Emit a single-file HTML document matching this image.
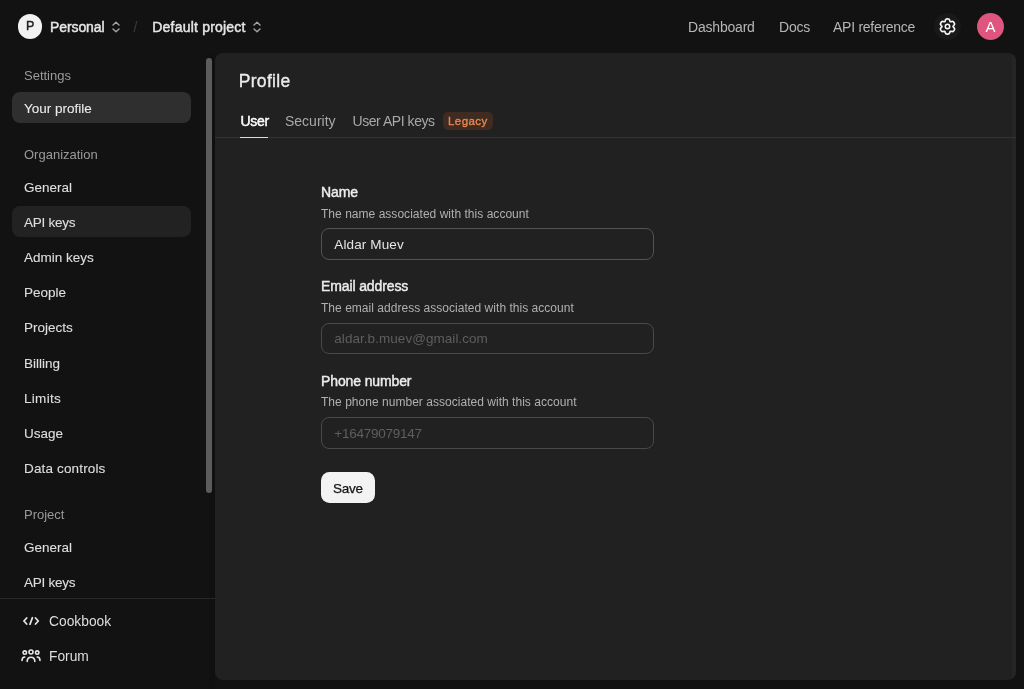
<!DOCTYPE html>
<html lang="en">
<head>
<meta charset="utf-8">
<title>Profile</title>
<style>
*{box-sizing:border-box;margin:0;padding:0}
html,body{width:1024px;height:689px;overflow:hidden;background:#121212;color:#ececec;font-family:"Liberation Sans",sans-serif;font-size:14px}
.abs{position:absolute}
#top{position:absolute;left:0;top:0;width:1024px;height:54px}
.pav{position:absolute;left:17.5px;top:14.3px;width:24.6px;height:24.6px;border-radius:50%;background:#f2f2f2;color:#222;font-size:12.5px;font-weight:400;-webkit-text-stroke:0.4px #222;text-align:center;line-height:25.6px;padding-left:0.8px}
.crumb{position:absolute;top:17px;font-size:14px;font-weight:400;-webkit-text-stroke:0.45px #e6e6e6;line-height:20px;color:#e6e6e6;white-space:nowrap;letter-spacing:0.1px}
.slash{position:absolute;top:17px;left:133.6px;color:#3c3c3c;font-size:14px;line-height:20px}
.nav{position:absolute;top:17px;font-size:14px;line-height:20px;color:#b6b6b6;white-space:nowrap;letter-spacing:-0.2px}
.gearbg{position:absolute;left:933.8px;top:12.7px;width:27.6px;height:27.6px;border-radius:50%;background:#191919}
.uav{position:absolute;left:976.8px;top:12.8px;width:27.6px;height:27.6px;border-radius:50%;background:#de5580;color:#fff;font-size:15px;text-align:center;line-height:28px}
#side{position:absolute;left:0;top:54px;width:214px;height:635px}
.sh{position:absolute;left:24px;margin-top:1px;font-size:13px;line-height:18px;color:#9a9a9a;white-space:nowrap}
.si{position:absolute;left:12px;width:179px;height:31px;border-radius:8px;padding-left:12px;padding-top:1px;font-size:13.5px;line-height:31px;color:#dedede;white-space:nowrap;-webkit-text-stroke:0.12px #dedede}
.si.sel{background:#2f2f2f;color:#ececec}
.si.hov{background:#222222}
.sb{position:absolute;left:205.7px;top:57.6px;width:6px;height:435.6px;border-radius:3px;background:#5c5c5c}
.sdiv{position:absolute;left:0;top:598px;width:215px;height:1px;background:#292929}
.sl{position:absolute;left:49px;font-size:13.8px;line-height:20px;color:#dedede;white-space:nowrap}
#main{position:absolute;left:215px;top:53.3px;width:800.5px;height:626.7px;border-radius:8px;background:#212121;overflow:hidden}
#mi{position:absolute;left:0;top:0.7px;width:800px;height:626px}
.mtrack{position:absolute;right:0;top:0;width:3.5px;height:100%;background:#252525}
h1{position:absolute;left:23.7px;top:16.5px;font-size:17.5px;line-height:22px;font-weight:400;color:#ececec;-webkit-text-stroke:0.35px #ececec;letter-spacing:0.32px}
.tab{position:absolute;top:57px;font-size:14px;line-height:20px;color:#a8a8a8;white-space:nowrap}
.tab.on{color:#fff;font-weight:400;-webkit-text-stroke:0.45px #fff;letter-spacing:-0.3px}
.tline{position:absolute;left:0;top:83px;width:801px;height:1px;background:#333}
.tul{position:absolute;left:25px;top:82.7px;width:28px;height:1.3px;background:#dedede}
.badge{position:absolute;left:228px;top:57.9px;width:49.6px;height:18.1px;border-radius:5px;background:#3f2b21;color:#e8864f;font-size:11.5px;font-weight:400;-webkit-text-stroke:0.35px #e8864f;line-height:19.4px;text-align:center;letter-spacing:0.4px;overflow:hidden}
.fl{position:absolute;left:106px;transform:translateY(0.5px);font-size:14px;font-weight:400;-webkit-text-stroke:0.45px #ececec;line-height:20px;color:#ececec;white-space:nowrap;letter-spacing:-0.12px}
.fd{position:absolute;left:106px;transform:translateY(0.5px);font-size:12px;line-height:16px;color:#b0b0b0;white-space:nowrap;letter-spacing:0.03px}
.fi{position:absolute;left:106px;width:333.25px;height:31.5px;border:1px solid #535353;border-radius:8px;padding-left:12.3px;padding-top:0.5px;font-size:13.5px;line-height:29.5px;color:#e4e4e4;white-space:nowrap;letter-spacing:0.12px}
.fi.dis{color:#5e5e5e;border-color:#494949;letter-spacing:0.05px}
.btn{position:absolute;left:106px;top:418px;width:54px;height:31.3px;border-radius:8.5px;background:#f3f3f3;color:#151515;font-size:13.5px;line-height:33px;text-align:center;-webkit-text-stroke:0.25px #151515;letter-spacing:-0.25px}
</style>
</head>
<body>
<div id="root" style="position:absolute;left:0;top:0;width:1024px;height:689px;will-change:transform">
<div id="top">
  <div class="pav">P</div>
  <div class="crumb" style="left:50px;letter-spacing:-0.1px">Personal</div>
  <svg class="abs" style="left:109.6px;top:18.7px" width="12" height="16" viewBox="0 0 12 16" fill="none" stroke="#a4a4a4" stroke-width="1.4" stroke-linecap="round" stroke-linejoin="round"><path d="M3 6.1 L6 3.3 L9 6.1"/><path d="M3 9.9 L6 12.7 L9 9.9"/></svg>
  <div class="slash">/</div>
  <div class="crumb" style="left:152.3px;letter-spacing:0.2px">Default project</div>
  <svg class="abs" style="left:251.2px;top:18.7px" width="12" height="16" viewBox="0 0 12 16" fill="none" stroke="#a4a4a4" stroke-width="1.4" stroke-linecap="round" stroke-linejoin="round"><path d="M3 6.1 L6 3.3 L9 6.1"/><path d="M3 9.9 L6 12.7 L9 9.9"/></svg>
  <div class="nav" style="left:688px">Dashboard</div>
  <div class="nav" style="left:779px">Docs</div>
  <div class="nav" style="left:833px;letter-spacing:-0.27px">API reference</div>
  <div class="gearbg"></div>
  <svg class="abs" style="left:938.1px;top:16.95px" width="19" height="19" viewBox="0 0 20 20" fill="none" stroke="#f5f5f5" stroke-width="1.8" stroke-linejoin="round"><path d="M15.85 10.00 L15.95 9.69 L16.22 9.35 L16.59 8.96 L16.96 8.52 L17.24 8.06 L17.39 7.60 L17.38 7.17 L17.27 6.76 L17.09 6.39 L16.88 6.03 L16.67 5.67 L16.44 5.32 L16.15 5.02 L15.77 4.80 L15.30 4.70 L14.76 4.71 L14.20 4.81 L13.68 4.94 L13.25 5.00 L12.93 4.93 L12.71 4.69 L12.55 4.28 L12.39 3.77 L12.20 3.23 L11.94 2.76 L11.61 2.40 L11.24 2.19 L10.83 2.09 L10.42 2.05 L10.00 2.05 L9.58 2.05 L9.17 2.09 L8.76 2.19 L8.39 2.40 L8.06 2.76 L7.80 3.23 L7.61 3.77 L7.45 4.28 L7.29 4.69 L7.08 4.93 L6.75 5.00 L6.32 4.94 L5.80 4.81 L5.24 4.71 L4.70 4.70 L4.23 4.80 L3.85 5.02 L3.56 5.32 L3.33 5.67 L3.12 6.03 L2.91 6.39 L2.73 6.76 L2.62 7.17 L2.61 7.60 L2.76 8.06 L3.04 8.52 L3.41 8.96 L3.78 9.35 L4.05 9.69 L4.15 10.00 L4.05 10.31 L3.78 10.65 L3.41 11.04 L3.04 11.48 L2.76 11.94 L2.61 12.40 L2.62 12.83 L2.73 13.24 L2.91 13.61 L3.12 13.97 L3.33 14.33 L3.56 14.68 L3.85 14.98 L4.23 15.20 L4.70 15.30 L5.24 15.29 L5.80 15.19 L6.32 15.06 L6.75 15.00 L7.07 15.07 L7.29 15.31 L7.45 15.72 L7.61 16.23 L7.80 16.77 L8.06 17.24 L8.39 17.60 L8.76 17.81 L9.17 17.91 L9.58 17.95 L10.00 17.95 L10.42 17.95 L10.83 17.91 L11.24 17.81 L11.61 17.60 L11.94 17.24 L12.20 16.77 L12.39 16.23 L12.55 15.72 L12.71 15.31 L12.93 15.07 L13.25 15.00 L13.68 15.06 L14.20 15.19 L14.76 15.29 L15.30 15.30 L15.77 15.20 L16.15 14.98 L16.44 14.68 L16.67 14.33 L16.88 13.97 L17.09 13.61 L17.27 13.24 L17.38 12.83 L17.39 12.40 L17.24 11.94 L16.96 11.48 L16.59 11.04 L16.22 10.65 L15.95 10.31 Z"/><circle cx="10" cy="10" r="2.35" stroke-width="1.55"/></svg>
  <div class="uav">A</div>
</div>

<div id="side">
  <div class="sh" style="top:12px">Settings</div>
  <div class="si sel" style="top:38px">Your profile</div>
  <div class="sh" style="top:91px">Organization</div>
  <div class="si" style="top:116.5px">General</div>
  <div class="si hov" style="top:152px;letter-spacing:-0.25px">API keys</div>
  <div class="si" style="top:186.9px">Admin keys</div>
  <div class="si" style="top:222.1px">People</div>
  <div class="si" style="top:257.3px">Projects</div>
  <div class="si" style="top:292.5px">Billing</div>
  <div class="si" style="top:327.7px;letter-spacing:0.3px">Limits</div>
  <div class="si" style="top:362.9px">Usage</div>
  <div class="si" style="top:398.1px;letter-spacing:0.15px">Data controls</div>
  <div class="sh" style="top:451px">Project</div>
  <div class="si" style="top:476.6px">General</div>
  <div class="si" style="top:511.8px;letter-spacing:-0.25px">API keys</div>
</div>
<div class="abs" style="left:208.5px;top:54px;width:6.5px;height:635px;background:#101010"></div>
<div class="sb"></div>
<div class="sdiv"></div>
<svg class="abs" style="left:22px;top:613.5px" width="18" height="14" viewBox="0 0 18 14" fill="none" stroke="#e4e4e4" stroke-width="1.8" stroke-linecap="round" stroke-linejoin="round"><path d="M4.7 4 L1.9 7 L4.7 10"/><path d="M13.5 4 L16.3 7 L13.5 10"/><path d="M10.4 3.8 L8 10.2"/></svg>
<div class="sl" style="top:611.6px">Cookbook</div>
<svg class="abs" style="left:21px;top:648px" width="20" height="16" viewBox="0 0 20 16" fill="none" stroke="#e4e4e4" stroke-width="1.6" stroke-linecap="round"><circle cx="10" cy="4" r="2"/><circle cx="3.8" cy="4.6" r="1.7"/><circle cx="16.2" cy="4.6" r="1.7"/><path d="M6.2 13.5 C6.2 10.8 7.8 9.2 10 9.2 C12.2 9.2 13.8 10.8 13.8 13.5"/><path d="M1 12.5 C1 10.3 2.2 9 3.8 9"/><path d="M19 12.5 C19 10.3 17.8 9 16.2 9"/></svg>
<div class="sl" style="top:646.8px">Forum</div>

<div id="main">
<div class="mtrack"></div>
<div id="mi">
  <h1>Profile</h1>
  <div class="tab on" style="left:25.4px">User</div>
  <div class="tab" style="left:70px">Security</div>
  <div class="tab" style="left:137.5px;letter-spacing:-0.45px">User API keys</div>
  <div class="badge">Legacy</div>
  <div class="tline"></div>
  <div class="tul"></div>

  <div class="fl" style="top:127px">Name</div>
  <div class="fd" style="top:151px">The name associated with this account</div>
  <div class="fi" style="top:174.2px">Aldar Muev</div>

  <div class="fl" style="top:221px">Email address</div>
  <div class="fd" style="top:245px">The email address associated with this account</div>
  <div class="fi dis" style="top:268.8px">aldar.b.muev@gmail.com</div>

  <div class="fl" style="top:316px">Phone number</div>
  <div class="fd" style="top:339px">The phone number associated with this account</div>
  <div class="fi dis" style="top:363.1px;letter-spacing:-0.24px">+16479079147</div>

  <div class="btn">Save</div>
</div>
</div>
</div>
</body>
</html>
